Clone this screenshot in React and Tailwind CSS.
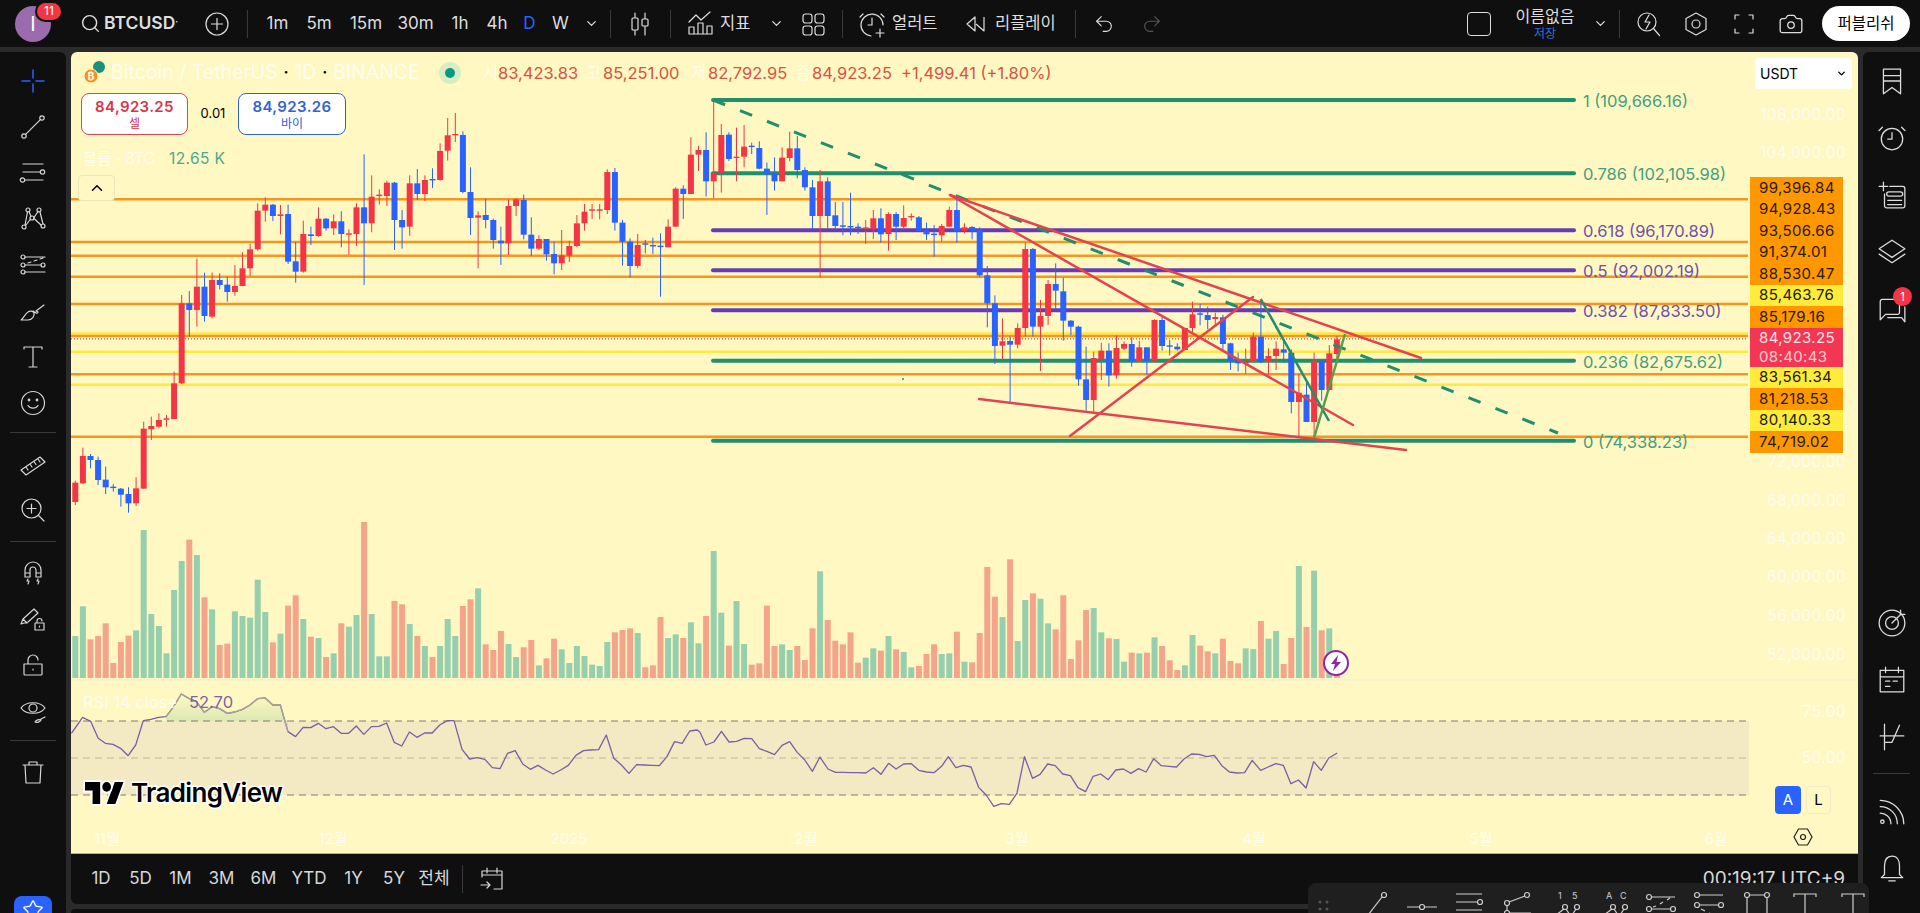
import { Search, ChevronDown, ChevronUp, Undo2, Redo2, Star, Camera } from "lucide-react";

// candle rows are [red, bodyTop, bodyBottom, high, low] as read off the chart at 3x
const seg = (base, rows) =>
  rows.map(([red, t, b, h, l]) => ({ red, t: t / 3 + base, b: b / 3 + base, h: h / 3 + base, l: l / 3 + base }));

const CANDLES = [
  ...seg(120, [
    [1,1088,1146,1082,1155],[1,1008,1090,983,1092],[0,1008,1020,1002,1045],[0,1020,1080,1010,1095],[0,1079,1102,1040,1122],
    [0,1100,1104,1092,1115],[0,1106,1124,1104,1160],[0,1122,1150,1102,1178],[1,1105,1150,1072,1158],[1,926,1106,905,1106],
    [1,918,928,890,960],[1,900,920,880,925],[1,895,898,885,920],[1,790,897,755,897],[1,550,790,525,792],
    [0,550,570,513,650],[1,500,570,416,620],[0,500,588,458,605],[1,480,590,458,595],[0,480,495,460,508],
    [0,494,516,470,545],[1,498,516,435,527],[1,445,498,397,498],[1,388,445,372,468],[1,272,388,250,392],
    [1,254,272,232,305],[0,254,288,252,303],[1,283,288,255,343],[0,282,425,254,432],[0,424,455,366,488],
    [1,342,455,302,458],[0,343,348,320,375],[1,296,348,262,350],[0,296,325,294,332],[1,304,325,283,345],
    [0,304,342,274,382],[1,340,342,328,405],[1,262,342,250,378],[0,262,310,103,495],[1,230,310,166,337],
    [1,224,228,208,254],[1,188,228,182,258],[0,188,300,186,390],[0,300,322,270,386],[1,190,320,166,347],
    [0,190,222,147,240],[1,180,222,166,243],[0,177,181,145,204],[1,93,180,70,182],[1,46,92,-6,122],
    [1,42,45,-21,66],[0,45,216,34,220],[0,216,294,142,345],[1,286,293,274,445],[0,285,300,236,325],
    [0,300,360,296,386],[0,362,370,320,435],
  ]),
  ...seg(90, [
    [1,348,460,328,495],[1,328,348,325,378],[0,330,434,314,448],[0,434,476,382,498],[1,447,476,436,480],
    [0,447,493,447,512],[0,492,520,455,553],[1,496,520,420,540],[1,468,497,452,516],[1,400,468,375,472],
    [1,365,400,342,422],[1,358,362,342,387],[1,358,362,342,388],[1,246,360,238,372],[0,246,398,234,422],
    [0,398,455,390,527],[0,455,528,445,563],[1,465,528,432,535],[0,460,464,450,490],[0,465,468,443,492],
    [0,467,470,430,620],[1,410,472,388,472],[1,296,410,292,410],[0,296,312,286,387],[1,194,312,142,312],
    [1,180,194,167,243],[0,180,274,127,320],[1,248,274,30,325],[1,135,248,102,308],[0,134,207,127,213],
    [1,200,204,113,274],[1,170,200,105,232],[0,167,171,158,192],[0,174,236,154,238],[0,236,252,218,375],
    [0,250,274,202,302],[1,203,274,172,274],[1,175,204,125,214],[0,175,240,138,265],[0,240,292,232,302],
    [0,292,378,270,418],[1,274,378,240,562],[0,274,378,262,415],[0,376,408,336,418],[0,406,410,336,436],
    [0,408,412,308,436],[0,410,414,400,432],[1,412,416,390,462],[1,385,418,360,447],[0,385,433,355,458],
    [1,372,432,367,482],[0,372,410,366,450],[1,384,410,346,420],[1,378,382,370,392],[0,382,422,378,424],
    [0,422,433,398,450],[0,431,434,405,500],[1,408,436,402,455],[1,360,410,350,410],[0,360,424,328,458],
    [1,412,422,400,430],[0,411,422,408,448],[0,418,556,412,560],[0,556,640,528,712],[0,640,768,616,822],
  ]),
  ...seg(180, [
    [1,484,497,415,538],[0,483,494,470,668],[1,444,494,430,505],[1,207,444,188,470],[0,207,440,204,470],
    [1,408,440,360,573],[1,312,408,300,435],[0,312,332,250,388],[0,334,422,293,482],[0,422,440,420,465],
    [0,440,598,437,617],[0,598,660,500,692],[1,534,660,515,700],[1,512,538,488,600],[0,512,586,490,620],
    [1,504,586,466,596],[1,492,506,484,510],[0,492,545,472,560],[1,502,545,482,545],[0,502,542,502,585],
    [1,420,542,418,542],[0,420,498,412,512],[0,496,500,480,526],[0,500,508,490,512],[1,444,510,444,510],
    [1,403,444,365,458],[0,400,404,372,436],[0,405,420,380,448],[1,411,417,398,438],[0,412,492,404,515],
    [0,490,542,488,570],[0,540,550,518,574],[1,546,550,506,582],[1,470,545,458,545],[0,470,546,360,550],
    [1,528,546,505,585],[1,506,528,484,570],[0,508,518,485,548],[0,518,666,508,700],[1,638,666,582,772],
    [0,644,726,598,726],[1,542,726,518,776],[0,542,630,540,662],[1,520,630,495,632],[1,478,522,468,538],
  ]),
];

// volume bars, same order as candles: [red, top] at 3x over y=510
const VOLUME = [
  [0,378],[0,289],[1,388],[1,378],[1,340],[1,459],[1,396],[1,377],[0,361],[0,60],[0,312],[0,348],[0,430],[0,240],[0,153],[1,89],[0,135],[1,262],[0,298],[1,405],
  [1,401],[0,304],[0,318],[0,323],[0,209],[0,306],[1,397],[0,371],[1,287],[1,256],[0,327],[1,380],[0,384],[1,441],[0,430],[1,340],[0,350],[0,315],[1,36],[0,312],
  [0,439],[0,439],[1,273],[1,283],[0,342],[1,378],[0,408],[1,441],[0,408],[0,327],[0,378],[1,288],[1,268],[0,235],[1,403],[1,420],[1,363],[0,402],[0,441],[1,412],
  [1,390],[0,466],[1,445],[1,386],[0,418],[0,459],[0,408],[0,438],[0,464],[0,468],[0,396],[1,367],[1,360],[1,355],[0,369],[1,472],[1,466],[1,321],[0,384],[0,373],
  [1,384],[0,337],[0,400],[1,318],[0,123],[0,308],[1,407],[0,273],[0,402],[1,464],[1,460],[1,287],[1,408],[0,403],[0,420],[1,408],[1,450],[1,355],[0,184],[1,330],
  [1,392],[1,403],[1,367],[1,458],[0,443],[0,415],[1,422],[0,378],[1,418],[0,426],[0,472],[1,468],[1,432],[1,403],[0,432],[0,430],[1,365],[0,455],[1,457],[1,369],
  [1,171],[1,260],[0,321],[1,148],[0,393],[0,270],[1,250],[0,266],[0,340],[1,358],[1,256],[1,447],[1,391],[1,300],[0,294],[0,367],[1,385],[0,387],[0,455],[1,428],
  [0,430],[1,428],[0,382],[1,408],[1,451],[1,480],[0,466],[0,375],[1,407],[1,424],[0,430],[1,386],[1,453],[1,460],[0,415],[0,417],[1,333],[0,386],[0,363],[1,462],
  [1,384],[0,168],[1,351],[0,182],[1,361],[0,355],[1,495],
];

const RSI_A = [
  [160,160],[185,112],[203,124],[220,175],[236,190],[253,193],[270,205],[287,227],[304,195],[321,122],[338,118],[355,112],[372,110],[389,80],[406,42],[423,55],[440,65],[458,97],[475,80],[492,86],[509,100],[526,96],[543,88],[560,75],[577,56],[594,54],[611,75],[628,75],[645,155],[662,170],[679,142],[696,143],[713,130],[730,146],[747,140],[764,160],[781,160],[798,138],[815,163],[832,140],[849,139],[866,129],[883,187],[900,198],[917,156],[934,172],[951,159],[968,159],[985,135],[1002,122],[1017,122],[1035,208],[1052,237],[1069,233],[1086,238],[1103,263],[1120,266],[1137,220],[1154,212],[1171,252],[1188,268],[1205,256],[1222,270],[1239,282],[1256,270],[1273,256],[1290,226],[1307,212],[1324,210],[1341,209],[1358,165],[1375,235],[1392,255],[1409,280],[1426,254],[1443,255],[1460,256],[1477,257],[1494,230],[1511,185],[1528,190],[1545,153],[1562,150],
];
const RSI_B = [
  [0,97],[14,135],[33,126],[51,94],[69,126],[87,124],[105,115],[123,116],[141,146],[159,154],[177,164],[195,136],[213,125],[231,157],[249,180],[267,214],[285,171],[304,207],[322,217],[340,217],[358,218],[376,218],[394,219],[412,203],[430,223],[448,190],[466,207],[484,192],[502,191],[520,211],[538,216],[556,218],[574,199],[590,170],[608,203],[626,196],[644,201],[662,262],[680,285],[698,319],[716,311],[735,313],[753,280],[771,170],[790,235],[808,223],[826,192],[844,197],[862,222],[880,227],[898,263],[916,275],[934,229],[952,222],[970,239],[988,210],[1006,207],[1024,220],[1042,206],[1060,216],[1078,176],[1096,197],[1114,199],[1132,201],[1150,177],[1168,162],[1186,163],[1204,170],[1222,166],[1240,197],[1258,216],[1276,219],[1294,218],[1312,181],[1332,211],[1350,201],[1368,191],[1386,196],[1404,251],[1422,240],[1440,264],[1458,185],[1476,211],[1494,174],[1514,159],
];
const RSI = [
  ...RSI_A.map(([x, y]) => [x / 2.24, y / 3 + 680]),
  ...RSI_B.map(([x, y]) => [x / 2.376 + 700, y / 3 + 700]),
];
const RSI_HUMP = RSI.slice(12, 29);
const toPoints = (pts) => pts.map(([x, y]) => `${x},${y}`).join(" ");

const H_LINES = [
  [199.3, "#f6961e"], [242, "#f6961e"], [255.7, "#f6961e"], [276.7, "#f6961e"], [304, "#f6961e"],
  [333.5, "#ffe83f"], [336, "#f6961e"], [351.7, "#ffe83f"], [374.3, "#f6961e"], [384.7, "#ffe83f"], [436.7, "#f6961e"],
];

const FIB = [
  { y: 100, color: "#1f8f6e", text: "#3f9f80", label: "1 (109,666.16)" },
  { y: 173.3, color: "#1f8f6e", text: "#3f9f80", label: "0.786 (102,105.98)" },
  { y: 230.3, color: "#673ab7", text: "#6f50ab", label: "0.618 (96,170.89)" },
  { y: 270.3, color: "#673ab7", text: "#6f50ab", label: "0.5 (92,002.19)" },
  { y: 310.3, color: "#673ab7", text: "#6f50ab", label: "0.382 (87,833.50)" },
  { y: 360.7, color: "#1f8f6e", text: "#3f9f80", label: "0.236 (82,675.62)" },
  { y: 440.7, color: "#1f8f6e", text: "#3f9f80", label: "0 (74,338.23)" },
];

const PRICE_TAGS = [
  ["99,396.84", "o"], ["94,928.43", "o"], ["93,506.66", "o"], ["91,374.01", "o"], ["88,530.47", "o"],
  ["85,463.76", "y"], ["85,179.16", "o"], ["84,923.25", "r"], ["83,561.34", "y"], ["81,218.53", "o"],
  ["80,140.33", "y"], ["74,719.02", "o"],
];

const cx = (i) => 75.3 + i * 7.6;
const RED = "#f23645";
const BLUE = "#2962ff";

const Ico = ({ size = 28, className = "", children }) => (
  <svg width={size} height={size} viewBox="0 0 28 28" fill="none" stroke="currentColor" strokeWidth="1.2" strokeLinecap="round" strokeLinejoin="round" className={className}>
    {children}
  </svg>
);

const LEFT_ICONS = {
  cross: <path d="M14 3v8M14 17v8M3 14h8M17 14h8" stroke={BLUE} strokeWidth="1.5" />,
  trend: <><circle cx="5" cy="23" r="2.2" /><circle cx="23" cy="5" r="2.2" /><path d="M6.6 21.4 21.4 6.6" /></>,
  pitch: <><path d="M4 5h20M4 13h17M6 21h18" /><circle cx="23.5" cy="13" r="2.2" /><circle cx="3.5" cy="21" r="2.2" /></>,
  pattern: <><circle cx="9" cy="5" r="2" /><circle cx="20" cy="5" r="2" /><circle cx="13" cy="13" r="2" /><circle cx="5" cy="22" r="2" /><circle cx="24" cy="21" r="2" /><path d="M8.5 7 6 20M10 6.5l2 5M15 12.5l4-6M21 7l3 12M7 20l4.5-6M15 13.5 22 20" /></>,
  fib: <><circle cx="4" cy="6" r="2" /><circle cx="4" cy="14" r="2" /><circle cx="4" cy="21" r="2" /><circle cx="24" cy="14" r="2" /><path d="M6 6h20M6 14h16M6 21h20M9 12l3-1M15 10l3-1M21 8l3-1" /></>,
  brush: <path d="M2 23c2-1 4-6 7-8 2-1.5 5-1 6 1 1 3-2 7-6 7H2ZM14 14l3 2c1 .5 2 0 2-1l-2-1 8-6" />,
  text: <path d="M5 6V4h18v2M14 4v20M10 24h8" />,
  smile: <><circle cx="14" cy="14" r="11.5" /><path d="M9 16.5c2 3.5 8 3.5 10 0" /><circle cx="10" cy="11" r=".8" fill="currentColor" /><circle cx="18" cy="11" r=".8" fill="currentColor" /></>,
  ruler: <path d="M2 20 21 7l5 5L7 25ZM7 17l2 3M11 14l2 3M15 11.5l2 3M19 9l2 3" />,
  zoom: <><circle cx="12.5" cy="12.5" r="9.5" /><path d="M19.5 19.5 25 25M8 12.5h9M12.5 8v9" /></>,
  magnet: <path d="M6 18v-7a8 8 0 0 1 16 0v7h-5v-7a3 3 0 0 0-6 0v7ZM6 14h5M17 14h5M9 20l-1 2h2l-1 3M19 20l-1 2h2l-1 3" />,
  pencil: <path d="m2 19 2-5L15 4l4 4L9 17ZM4 14l4 4M16 18h9v7h-9ZM18 18v-2a2.5 2.5 0 0 1 5 0M20.5 21v1" />,
  lock: <path d="M5 13h18v10a1 1 0 0 1-1 1H6a1 1 0 0 1-1-1ZM9 13V9a5 5 0 0 1 10 0M14 18v1" />,
  eye: <><path d="M2 11c5-7 19-7 24 0-5 7-19 7-24 0Z" /><circle cx="14" cy="11" r="4" /><path d="M16 25c1-2 4-3 6-2-1 2-4 3-6 2ZM22 22l4-2" /></>,
  trash: <path d="M4 7h20M10 7V4h8v3M6 7l1 18h14l1-18" />,
};

const LeftBtn = ({ name }) => (
  <div className="h-[46px] flex items-center justify-center text-[#d6d6d6]">
    <Ico>{LEFT_ICONS[name]}</Ico>
  </div>
);

const Sep = () => <div className="mx-[10px] h-px bg-[#3a3a3a]" />;

const LeftToolbar = () => (
  <aside className="w-[66px] shrink-0 bg-[#0f0f0f] rounded-tr-md pt-[6px] relative">
    {["cross", "trend", "pitch", "pattern", "fib", "brush", "text", "smile"].map((n) => <LeftBtn key={n} name={n} />)}
    <div className="mt-[6px] mb-[8px]"><Sep /></div>
    {["ruler", "zoom"].map((n) => <LeftBtn key={n} name={n} />)}
    <div className="mt-[8px] mb-[8px]"><Sep /></div>
    {["magnet", "pencil", "lock", "eye"].map((n) => <LeftBtn key={n} name={n} />)}
    <div className="mt-[6px] mb-[8px]"><Sep /></div>
    <LeftBtn name="trash" />
    <div className="absolute left-[14px] top-[844px] w-[38px] h-[30px] rounded-t-lg bg-[#2962ff] flex justify-center pt-[3px] text-white">
      <Star size={22} strokeWidth={1.4} />
    </div>
  </aside>
);

const RIGHT_ICONS = {
  list: <path d="M6 3h16v23l-8-6-8 6ZM6 9h16M6 14h16" />,
  clock: <><circle cx="14" cy="15" r="10" /><path d="M14 9v6h-4M5 4 2 7M23 4l3 3" /></>,
  note: <path d="M2 6h8M6 2v8M12 6h12a2 2 0 0 1 2 2v16a2 2 0 0 1-2 2H9a2 2 0 0 1-2-2V13M11 11h11a1.5 1.5 0 0 1 0 4H11a1.5 1.5 0 0 1 0-4ZM10 19h13M10 23h13" />,
  layers: <path d="M14 3 26 11l-12 8L2 11ZM2 16l12 8 12-8" />,
  chat: <path d="M3 24V7a2 2 0 0 1 2-2h14a2 2 0 0 1 2 2v10a2 2 0 0 1-2 2H8ZM10 22h13l3 4V12" />,
  target: <><circle cx="14" cy="14" r="12" /><circle cx="14" cy="14" r="6" /><path d="M14 14 22 6M22 6V2M22 6h4" /></>,
  calendar: <path d="M3 5h22v20H3ZM3 11h22M8 2v5M20 2v5M8 15h4M15 15h4M8 20h4" />,
  options: <path d="M7 2v24M7 19h7l7-16M3 13h22" />,
  signal: <><circle cx="5" cy="24" r="1.6" /><path d="M3 16c5 0 10 4 10 10M3 10c9 0 16 7 16 16M3 4c12 0 22 10 22 22" /></>,
  bell: <path d="M14 3c-5 0-7 4-7 9v8l-3 3h20l-3-3v-8c0-5-2-9-7-9ZM11 26h6" />,
};

const RightBtn = ({ name, children }) => (
  <div className="h-[57px] flex items-center justify-center text-[#dcdcdc] relative">
    <Ico size={30}>{RIGHT_ICONS[name]}</Ico>
    {children}
  </div>
);

const RightToolbar = () => (
  <aside className="w-[57px] shrink-0 bg-[#0f0f0f] rounded-tl-md flex flex-col pb-[17px]">
    <RightBtn name="list" />
    <RightBtn name="clock" />
    <RightBtn name="note" />
    <RightBtn name="layers" />
    <RightBtn name="chat">
      <span className="absolute top-[7px] left-[30px] w-[19px] h-[19px] rounded-full bg-[#f23645] text-white text-[12px] flex items-center justify-center">1</span>
    </RightBtn>
    <div className="mt-auto" />
    <RightBtn name="target" />
    <RightBtn name="calendar" />
    <RightBtn name="options" />
    <div className="mx-[10px] mt-[8px] mb-[8px] h-px bg-[#3a3a3a]" />
    <RightBtn name="signal" />
    <RightBtn name="bell" />
  </aside>
);

const TIMES = [
  ["1m", "w-[39px]"], ["5m", "w-[44px]"], ["15m", "w-[50px]"], ["30m", "w-[49px]"],
  ["1h", "w-[40px]"], ["4h", "w-[34px]"], ["D", "w-[31px] text-[#2962ff]"], ["W", "w-[31px]"],
];

const VSep = ({ className }) => <div className={`w-px h-[28px] bg-[#3a3a3a] shrink-0 ${className}`} />;

const TopBar = () => (
  <header className="h-[47px] shrink-0 bg-[#0f0f0f] flex items-center pl-[15px] pr-[10px] text-[#dedede] text-[17px]">
    <div className="relative w-[36px] h-[36px] rounded-full bg-[#9a6cae] text-white flex items-center justify-center shrink-0 text-[20px]">
      I
      <span className="absolute -top-[5px] left-[20px] w-[28px] h-[21px] rounded-full bg-[#f23645] border-2 border-[#0f0f0f] text-[12px] flex items-center justify-center">11</span>
    </div>
    <Search size={21} strokeWidth={1.6} className="ml-[29px] shrink-0" />
    <span className="ml-[3px] w-[76px] font-semibold text-[17.5px] whitespace-nowrap">BTCUSD<sup className="text-[9px]">·</sup></span>
    <svg width="24" height="24" viewBox="0 0 24 24" fill="none" stroke="currentColor" strokeWidth="1.2" className="ml-[25px] shrink-0">
      <circle cx="12" cy="12" r="11" />
      <path d="M12 6v12M6 12h12" />
    </svg>
    <VSep className="ml-[18px]" />
    <div className="flex ml-[10px]">
      {TIMES.map(([t, cls]) => <span key={t} className={`text-center shrink-0 ${cls}`}>{t}</span>)}
    </div>
    <div className="w-[30px] flex justify-center shrink-0"><ChevronDown size={15} /></div>
    <VSep className="ml-[4px]" />
    <Ico className="ml-[15px] shrink-0">
      <path d="M9 3v22M19 3v22" /><rect x="6" y="8" width="6" height="12" rx="1" fill="#0f0f0f" /><rect x="16" y="9" width="6" height="7" rx="1" fill="#0f0f0f" />
    </Ico>
    <VSep className="ml-[16px]" />
    <Ico className="ml-[15px] shrink-0">
      <path d="M3 24v-7h5v7ZM12 24V13h5v11ZM3 24h23M21 24v-8h5v8ZM3 12l7-7 5 5 9-8" />
    </Ico>
    <span className="ml-[6px] w-[30px] text-[16.5px] whitespace-nowrap">지표</span>
    <ChevronDown size={15} className="ml-[19px] shrink-0" />
    <Ico className="ml-[15px] shrink-0">
      <rect x="4" y="4" width="9" height="9" rx="2.5" /><rect x="16" y="4" width="9" height="9" rx="2.5" /><rect x="4" y="16" width="9" height="9" rx="2.5" /><rect x="16" y="16" width="9" height="9" rx="2.5" />
    </Ico>
    <VSep className="ml-[15px]" />
    <Ico className="ml-[15px] shrink-0">
      <path d="M13 26A11 11 0 1 1 25 15M14 8v7h-4M5 4 2 7M23 4l3 3M22 19v8M18 23h8" />
    </Ico>
    <span className="ml-[6px] w-[47px] text-[16.5px] whitespace-nowrap">얼러트</span>
    <svg width="24" height="24" viewBox="0 0 24 24" fill="none" stroke="currentColor" strokeWidth="1.2" strokeLinejoin="round" className="ml-[25px] shrink-0">
      <path d="M11 5v14L3 12ZM20 5v14l-8-7" />
    </svg>
    <span className="ml-[7px] w-[62px] text-[16.5px] whitespace-nowrap">리플레이</span>
    <VSep className="ml-[18px]" />
    <Undo2 size={22} strokeWidth={1.2} className="ml-[17px] shrink-0" />
    <Redo2 size={22} strokeWidth={1.2} className="ml-[26px] shrink-0 text-[#555]" />
    <div className="ml-auto w-[24px] h-[24px] rounded-[4px] border border-[#dedede] shrink-0" />
    <div className="ml-[22px] w-[64px] text-center shrink-0 leading-none">
      <div className="text-[16px] leading-[20px] whitespace-nowrap">이름없음</div>
      <div className="text-[12px] text-[#2f6fe0] leading-[15px]">저장</div>
    </div>
    <ChevronDown size={15} className="ml-[16px] shrink-0" />
    <VSep className="ml-[11px]" />
    <Ico className="ml-[14px] shrink-0">
      <circle cx="13" cy="12" r="9" /><path d="m19.5 18.5 6 7M15 5l-4 7h5l-4 7" />
    </Ico>
    <Ico className="ml-[20px] shrink-0">
      <path d="M14 3 24 8.5v11L14 25 4 19.5v-11Z" /><circle cx="14" cy="14" r="4" />
    </Ico>
    <Ico className="ml-[20px] shrink-0">
      <path d="M5 9V5h4M19 5h4v4M23 19v4h-4M9 23H5v-4" />
    </Ico>
    <Camera size={26} strokeWidth={1.2} className="ml-[20px] shrink-0" />
    <button className="ml-[18px] w-[88px] h-[35px] rounded-full bg-white text-black text-[15.5px] shrink-0 whitespace-nowrap">퍼블리쉬</button>
  </header>
);

const ChartSvg = () => {
  const hump = [[RSI_HUMP[0][0], 721], ...RSI_HUMP, [RSI_HUMP[RSI_HUMP.length - 1][0], 721]];
  return (
    <svg width="1787" height="802" viewBox="71 52 1787 802" className="absolute inset-0">
      <defs>
        <linearGradient id="hump" x1="0" y1="0" x2="0" y2="1">
          <stop offset="0" stopColor="#fff8c2" />
          <stop offset="1" stopColor="#cfe2ac" />
        </linearGradient>
      </defs>

      {H_LINES.map(([y, c]) => <line key={y} x1="71" x2="1748" y1={y} y2={y} stroke={c} strokeWidth="2.5" />)}
      <line x1="71" x2="1748" y1="338.8" y2="338.8" stroke="#e8503a" strokeWidth="1.2" strokeDasharray="1 2" />
      {FIB.map((f) => <line key={f.y} x1="713" x2="1574" y1={f.y} y2={f.y} stroke={f.color} strokeWidth="4" strokeLinecap="round" />)}

      {CANDLES.map((c, i) => {
        const color = c.red ? RED : BLUE;
        return (
          <g key={i}>
            <line x1={cx(i)} x2={cx(i)} y1={c.h} y2={c.l} stroke={color} strokeWidth="1" />
            <rect x={cx(i) - 3} y={c.t} width="6" height={Math.max(c.b - c.t, 1.4)} fill={color} />
          </g>
        );
      })}

      {/* trend lines */}
      <line x1="713" y1="100" x2="1558" y2="433" stroke="#1f8f6e" strokeWidth="3" strokeDasharray="13 16" />
      <g stroke="#e2434f" strokeWidth="2.5" strokeLinecap="round">
        <line x1="950" y1="195" x2="1421" y2="358" />
        <line x1="950" y1="195" x2="1353" y2="425" />
        <line x1="979" y1="399" x2="1406" y2="450" />
        <line x1="1070" y1="436" x2="1253" y2="297" />
      </g>
      <line x1="1260.7" y1="299" x2="1329" y2="421" stroke="#1f8f6e" strokeWidth="2.5" />
      <line x1="1314" y1="438" x2="1345" y2="334" stroke="#55a04a" strokeWidth="2.5" />
      <circle cx="903" cy="379" r="1" fill="#1f8f6e" />

      {/* volume */}
      {VOLUME.map(([red, top], i) => {
        const y = top / 3 + 510;
        return <rect key={i} x={cx(i) - 3} y={y} width="6" height={678 - y} fill={red ? "#f4a48b" : "#96cfae"} />;
      })}
      <line x1="71" x2="1858" y1="680" y2="680" stroke="#f5f1cf" strokeWidth="1.5" />

      {/* RSI pane */}
      <rect x="71" y="721" width="1678" height="74" fill="#f3e9c3" />
      <polygon points={toPoints(hump)} fill="url(#hump)" />
      <line x1="71" x2="1749" y1="721" y2="721" stroke="#7f7c72" strokeWidth="1.2" strokeDasharray="7 5" />
      <line x1="71" x2="1749" y1="758" y2="758" stroke="#bdb8a0" strokeWidth="1.2" strokeDasharray="7 5" />
      <line x1="71" x2="1749" y1="795" y2="795" stroke="#7f7c72" strokeWidth="1.2" strokeDasharray="7 5" />
      <polyline points={toPoints(RSI)} fill="none" stroke="#7b5ea7" strokeWidth="1.3" strokeLinejoin="round" />
      <polyline points={toPoints(RSI_HUMP)} fill="none" stroke="#a9a794" strokeWidth="1.3" strokeLinejoin="round" />
    </svg>
  );
};

const Legend = () => (
  <>
    <div className="absolute left-[12px] top-[9px] flex items-center h-[24px] text-[16.5px]">
      <svg width="24" height="24" viewBox="0 0 24 24" className="shrink-0">
        <circle cx="16" cy="6" r="6" fill="#1f8f7d" />
        <circle cx="8" cy="15" r="7" fill="#f7931a" stroke="#fff8c2" strokeWidth="1" />
        <text x="8" y="19" textAnchor="middle" fontSize="10" fontWeight="700" fill="#fff">₿</text>
      </svg>
      <span className="ml-[4px] w-[309px] text-white/75 text-[19.5px] whitespace-nowrap shrink-0">
        Bitcoin / TetherUS <span className="text-black">·</span> 1D <span className="text-black">·</span> BINANCE
      </span>
      <span className="ml-[19px] w-[22px] h-[22px] rounded-full bg-[#d9ecc4] flex items-center justify-center shrink-0">
        <span className="w-[10px] h-[10px] rounded-full bg-[#089981]" />
      </span>
      <span className="ml-[22px] flex text-[#e0503f] whitespace-nowrap">
        <span className="text-white/75 w-[15px]">시</span><span className="w-[88px]">83,423.83</span>
        <span className="text-white/75 w-[17px]">고</span><span className="w-[88px]">85,251.00</span>
        <span className="text-white/75 w-[17px]">저</span><span className="w-[88px]">82,792.95</span>
        <span className="text-white/75 w-[16px]">종</span><span className="w-[89px]">84,923.25</span>
        <span>+1,499.41 (+1.80%)</span>
      </span>
    </div>

    <div className="absolute left-[10px] top-[41px] flex items-center">
      <div className="w-[107px] h-[42px] rounded-lg border-[1.5px] border-[#e2434f] bg-white text-[#d63648] flex flex-col items-center justify-center leading-none">
        <span className="text-[15px] font-semibold tracking-wide">84,923.25</span>
        <span className="text-[12px] mt-[4px]">셀</span>
      </div>
      <span className="w-[50px] text-center text-[13px] text-black">0.01</span>
      <div className="w-[108px] h-[42px] rounded-lg border-[1.5px] border-[#2f62d6] bg-white text-[#2f62d6] flex flex-col items-center justify-center leading-none">
        <span className="text-[15px] font-semibold tracking-wide">84,923.26</span>
        <span className="text-[12px] mt-[4px]">바이</span>
      </div>
    </div>

    <div className="absolute left-[12px] top-[95px] flex items-center text-[15.5px]">
      <span className="w-[86px] text-white/75">볼륨 · BTC</span>
      <span className="text-[#4da88c] tracking-wide">12.65 K</span>
    </div>

    <div className="absolute left-[7px] top-[123px] w-[37px] h-[26px] rounded-[4px] border border-[#ece5c0] bg-[#fff8c2] flex items-center justify-center text-black">
      <ChevronUp size={18} strokeWidth={2} />
    </div>
  </>
);

const TAG_CLASS = {
  o: "bg-[#ff9800] text-[#2a1a00] h-[21.5px] items-center",
  y: "bg-[#ffeb3b] text-[#1a1a00] h-[21.5px] items-center",
  r: "bg-[#f23654] text-[#ffe3e6] h-[39px] flex-col justify-center leading-[19px]",
};

const PriceAxis = () => (
  <div className="absolute left-[1679px] top-[125px] w-[93px] flex flex-col text-[15px] tracking-wide">
    {PRICE_TAGS.map(([p, kind]) => (
      <div key={p} className={`flex pl-[9px] ${TAG_CLASS[kind]}`}>
        <span>{p}</span>
        {kind === "r" && <span className="opacity-85">08:40:43</span>}
      </div>
    ))}
  </div>
);

// pale labels that sit over the chart at their price or time
const AXIS_LABELS = [
  ["108,000.00", 115], ["104,000.00", 153], ["72,000.00", 462], ["68,000.00", 501],
  ["64,000.00", 539], ["60,000.00", 577], ["56,000.00", 616], ["52,000.00", 655],
  ["75.00", 712], ["50.00", 758],
];
const TIME_LABELS = [["11월", 107], ["12월", 333], ["2025", 569], ["2월", 806], ["3월", 1017], ["4월", 1254], ["5월", 1481], ["6월", 1716]];

const Chart = () => (
  <div className="relative h-[802px] shrink-0 bg-[#fff8c2] rounded-t-md overflow-hidden font-normal border-b border-[#b8b38a]">
    <ChartSvg />
    <Legend />

    {FIB.map((f) => (
      <span key={f.y} className="absolute left-[1512px] -translate-y-1/2 text-[16.5px] whitespace-nowrap" style={{ top: f.y - 51, color: f.text }}>
        {f.label}
      </span>
    ))}

    {AXIS_LABELS.map(([t, y]) => (
      <span key={t} className="absolute right-[12px] -translate-y-1/2 text-[15.5px] text-white/75 tracking-wide" style={{ top: y - 52 }}>{t}</span>
    ))}
    {TIME_LABELS.map(([t, x]) => (
      <span key={t} className="absolute top-[776px] -translate-x-1/2 text-[15px] text-white/75" style={{ left: x - 71 }}>{t}</span>
    ))}

    <div className="absolute left-[1684px] top-[6px] w-[97px] h-[31px] rounded bg-white flex items-center justify-between pl-[5px] pr-[5px] text-[14px] text-black">
      USDT
      <ChevronDown size={11} strokeWidth={3} />
    </div>

    <PriceAxis />

    <div className="absolute left-[12px] top-[638px] flex text-[16.5px] items-center">
      <span className="text-white/75">RSI 14 close</span>
      <span className="ml-[12px] text-[#7b64a3]">52.70</span>
    </div>

    <div className="absolute left-[14px] top-[728px] flex items-center gap-[7px]">
      <svg width="39" height="22" viewBox="0 4 36 18" preserveAspectRatio="none" className="overflow-visible">
        <g stroke="#fff" strokeWidth="3" paintOrder="stroke" fill="#000">
          <path d="M14 22H7V11H0V4h14v18zM28 22h-8l7.5-18h8L28 22z" />
          <circle cx="20" cy="8" r="4" />
        </g>
      </svg>
      <span className="text-[26px] font-semibold tracking-tight text-black leading-none [-webkit-text-stroke:3px_white] [paint-order:stroke_fill]">TradingView</span>
    </div>

    <div className="absolute left-[1704px] top-[734px] flex gap-[5px] text-[15px]">
      <span className="w-[26px] h-[28px] rounded bg-[#2962ff] text-white flex items-center justify-center">A</span>
      <span className="w-[25px] h-[28px] rounded border border-[#f0ebcb] text-black flex items-center justify-center">L</span>
    </div>

    <svg width="20" height="20" viewBox="0 0 20 20" fill="none" stroke="#222" strokeWidth="1.2" className="absolute left-[1722px] top-[775px]">
      <path d="M5.5 2h9L19 10l-4.500 8h-9L1 10Z" />
      <circle cx="10" cy="10" r="2.5" />
    </svg>

    <div className="absolute left-[1252px] top-[598px] w-[26px] h-[26px] rounded-full bg-white border-2 border-[#8e24aa] flex items-center justify-center">
      <svg width="14" height="16" viewBox="0 0 14 16" fill="#8e24aa"><path d="M9 0 2 9h4l-2 7 8-9H7.5Z" /></svg>
    </div>
  </div>
);

const RANGES = [
  ["1D", "w-[40px]"], ["5D", "w-[39px]"], ["1M", "w-[41px]"], ["3M", "w-[41px]"], ["6M", "w-[43px]"],
  ["YTD", "w-[48px]"], ["1Y", "w-[41px]"], ["5Y", "w-[40px]"], ["전체", "w-[40px]"],
];

const BottomBar = () => (
  <div className="h-[50px] shrink-0 bg-[#0f0f0f] rounded-b-md flex items-center pl-[10px] pr-[13px] text-[#d8d8d8] text-[17px]">
    {RANGES.map(([t, w]) => <span key={t} className={`text-center shrink-0 whitespace-nowrap ${w}`}>{t}</span>)}
    <div className="ml-[8px] w-px h-[28px] bg-[#3a3a3a]" />
    <Ico className="ml-[15px]">
      <path d="M4 12V6h20v18h-8M4 10h20M9 3v5M19 3v5M3 20h9M9 17l3 3-3 3" />
    </Ico>
    <span className="ml-auto text-[19px]">00:19:17 UTC+9</span>
  </div>
);

const Dot2 = ({ x, y }) => <circle cx={x} cy={y} r="2.5" />;

const FLOAT_ICONS = [
  <><Dot2 x="27" y="4" /><path d="M25 6 8 28" /></>,
  <><path d="M2 16h12M20 16h12" /><Dot2 x="17" y="16" /></>,
  <><path d="M3 3h26M3 11h21M3 19h26" /><Dot2 x="27" y="11" /></>,
  <><Dot2 x="6" y="12" /><Dot2 x="26" y="4" /><Dot2 x="6" y="22" /><path d="M8 11 24 5M6 14v6M8 22h22" /></>,
  <><text x="9" y="8" fontSize="9" stroke="none" fill="currentColor">1</text><text x="23" y="8" fontSize="9" stroke="none" fill="currentColor">5</text><Dot2 x="16" y="16" /><Dot2 x="28" y="16" /><Dot2 x="6" y="26" /><path d="M7 24l8-6M17 18l4 6M23 24l4-6" /></>,
  <><text x="9" y="8" fontSize="9" stroke="none" fill="currentColor">A</text><text x="23" y="8" fontSize="9" stroke="none" fill="currentColor">C</text><Dot2 x="16" y="16" /><Dot2 x="28" y="16" /><Dot2 x="6" y="26" /><path d="M7 24l8-6M17 18l4 6M23 24l4-6" /></>,
  <><Dot2 x="4" y="6" /><Dot2 x="4" y="18" /><Dot2 x="28" y="18" /><path d="M7 6h23M7 18h18M8 16l3-1M15 13l3-2M22 9l3-2" /></>,
  <><Dot2 x="4" y="4" /><Dot2 x="4" y="14" /><Dot2 x="28" y="14" /><path d="M7 4h23M7 14h18M8 18l4 2M16 22l4 2" /></>,
  <><Dot2 x="6" y="4" /><Dot2 x="26" y="4" /><path d="M9 4h14M6 7v24M26 7v24" /></>,
  <path d="M5 6V3h22v3M16 3v28" />,
  <><path d="M5 6V3h22v3M16 3v28" /><circle cx="30" cy="24" r="1.5" fill="currentColor" /></>,
];

const FloatBar = () => (
  <div className="absolute left-[1308px] top-[883px] w-[561px] h-[60px] rounded-t-lg bg-[#1f1f1f] flex items-start pt-[8px] text-[#cfcfcf]">
    <svg width="30" height="30" viewBox="0 0 30 30" fill="#555" className="shrink-0">
      <circle cx="12" cy="11" r="1.5" /><circle cx="19" cy="11" r="1.5" /><circle cx="12" cy="18" r="1.5" /><circle cx="19" cy="18" r="1.5" />
    </svg>
    <div className="flex ml-[11px]">
      {FLOAT_ICONS.map((icon, i) => (
        <svg key={i} width="48" height="34" viewBox="-8 0 48 34" fill="none" stroke="currentColor" strokeWidth="1.2" className="shrink-0">
          {icon}
        </svg>
      ))}
    </div>
  </div>
);

export default function App() {
  return (
    <div className="relative w-[1920px] h-[913px] overflow-hidden bg-[#2a2a2a] flex flex-col font-['Inter','Noto_Sans_CJK_KR',sans-serif]">
      <TopBar />
      <div className="flex gap-[5px] mt-[5px] flex-1 min-h-0">
        <LeftToolbar />
        <main className="w-[1787px] shrink-0 flex flex-col">
          <Chart />
          <BottomBar />
          <div className="mt-[5px] flex-1 bg-[#0f0f0f] rounded-t-md" />
        </main>
        <RightToolbar />
      </div>
      <FloatBar />
    </div>
  );
}
